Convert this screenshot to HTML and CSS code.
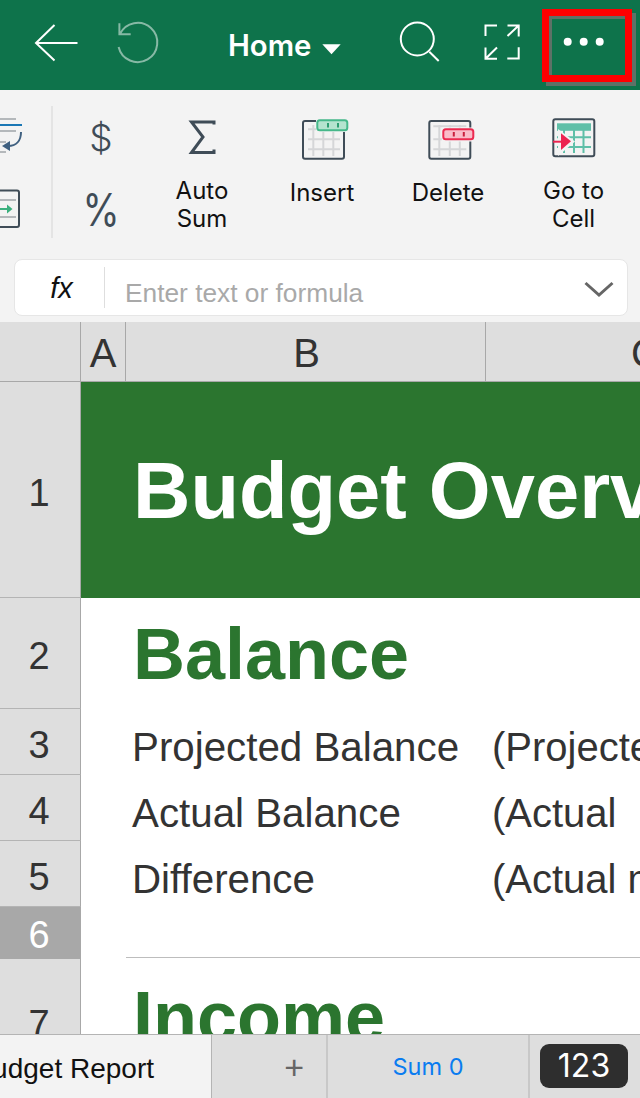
FILE: index.html
```html
<!DOCTYPE html>
<html lang="en">
<head>
<meta charset="utf-8">
<title>Budget Report</title>
<link rel="stylesheet" href="styles.css">
</head>
<body>
<div class="app">
  <header class="topbar">
    <svg class="ic ic-back" viewBox="34 0 46 90"><path d="M77.5 43H36M54.5 25 36 43l18.5 17.5"/></svg>
    <svg class="ic ic-undo" viewBox="116 0 44 90"><path d="M120 34A19.6 19.6 0 1 1 118.6 47M119.4 23.3V34.3H130.7"/></svg>
    <span class="home">Home</span>
    <svg class="ic ic-caret" viewBox="320 0 24 90"><path class="solid" d="M322.3 44.3H340.7L331.5 54.3Z"/></svg>
    <svg class="ic ic-search" viewBox="398 0 44 90"><circle cx="417.3" cy="39" r="16.5"/><path d="M429.3 51.7 438.7 61"/></svg>
    <svg class="ic ic-expand" viewBox="483 0 39 90"><path d="M485.5 36V25.5H497M518.7 47.3V58.5H507.3M507.5 25.5H518.7V36.5M518.7 25.5 507.5 36M485.5 47.5V58.7H497M485.5 58.7 497 47.5"/></svg>
    <svg class="ic ic-more" viewBox="560 0 48 90"><circle class="solid" cx="567.7" cy="41.7" r="4"/><circle class="solid" cx="583.7" cy="41.7" r="4"/><circle class="solid" cx="599.7" cy="41.7" r="4"/></svg>
    <div class="highlight"></div>
  </header>

  <section class="ribbon">
    <div class="tools">
      <div class="clip-col">
        <svg class="clip-icon" viewBox="0 112 26 48">
          <path class="g" d="M0 119H16M0 131H16M0 142H6M0 152H6"/>
          <path class="b" d="M0 125H22"/>
          <path class="a" d="M21 132C21 141 16 146 8 146"/>
          <path class="af" d="M2 146 10 141V151Z"/>
        </svg>
        <svg class="clip-icon" viewBox="0 186 26 46">
          <path class="g" d="M0 200H16M0 217H16"/>
          <path class="bx" d="M0 190.500H17A2 2 0 0 1 19 192.500V225A2 2 0 0 1 17 227H0"/>
          <path class="gr" d="M0 209H8"/>
          <path class="grf" d="M7 204.500 12.500 209 7 213.500Z"/>
        </svg>
      </div>
      <div class="divider"></div>
      <div class="fmt-col">
        <span class="fmt dollar">$</span>
        <span class="fmt percent">%</span>
      </div>
      <div class="tool">
        <svg class="tool-icon" viewBox="0 0 60 46"><path class="sigma" d="M42 6.500V4H19.500L31 19 19.500 34.500H42V31.500"/></svg>
        <span class="label">Auto<br>Sum</span>
      </div>
      <div class="tool">
        <svg class="tool-icon" viewBox="-7 0 60 46">
          <path class="gl" d="M9 11.300H41M9 21.300H41M9 31.300H41M14.300 7V38M24.300 7V38M34.300 7V38"/>
          <rect class="bx" x="4" y="3" width="41" height="37.700" rx="2"/>
          <rect class="halo" x="17" y="0" width="33" height="14"/>
          <rect class="pill-g" x="18.300" y="2.300" width="30" height="10" rx="2.500"/>
          <path class="tick-g" d="M29 5V9.500M39 5V9.500"/>
        </svg>
        <span class="label one">Insert</span>
      </div>
      <div class="tool">
        <svg class="tool-icon" viewBox="-10.300 0 60 46">
          <path class="gl" d="M5 8.300H38M5 21.300H38M5 31.300H38M11 7V38M21.500 7V38M31.500 7V38"/>
          <rect class="bx" x="1" y="3" width="41" height="37.700" rx="2"/>
          <rect class="halo" x="13.500" y="9.500" width="34" height="14"/>
          <rect class="pill-r" x="15" y="11.300" width="30" height="10" rx="2.500"/>
          <path class="tick-r" d="M25.500 14V18.500M35.500 14V18.500"/>
        </svg>
        <span class="label one">Delete</span>
      </div>
      <div class="tool">
        <svg class="tool-icon" viewBox="0 0 60 46">
          <rect class="bx" x="9.300" y="1.300" width="41" height="37" rx="2"/>
          <rect class="teal" x="13" y="5.300" width="34" height="7.500"/>
          <path class="tl" d="M13 19.300H47M13 29H47M30 12V35M39.500 12V35M20 12V35"/>
          <path class="halof" d="M14 11 31 23.500 14 38Z"/>
          <path class="redf" d="M17 15.300 27 23.300 17 32Z"/>
          <path class="redl" d="M9 23.700H18"/>
        </svg>
        <span class="label">Go to<br>Cell</span>
      </div>
    </div>
    <div class="formula">
      <span class="fx">fx</span>
      <span class="placeholder">Enter text or formula</span>
      <svg class="chev" viewBox="0 0 30 16"><path d="M1.500 2 15 14 28.500 2"/></svg>
    </div>
  </section>

  <main class="sheet">
    <div class="row head">
      <div class="rh"></div>
      <div class="ch col-a">A</div>
      <div class="ch col-b">B</div>
      <div class="ch col-c">C</div>
    </div>
    <div class="row r1">
      <div class="rh">1</div>
      <div class="title-cell">Budget Overview</div>
    </div>
    <div class="row r2">
      <div class="rh">2</div>
      <div class="col-a"></div>
      <div class="heading">Balance</div>
    </div>
    <div class="row r3">
      <div class="rh">3</div>
      <div class="col-a"></div>
      <div class="cell col-b">Projected Balance</div>
      <div class="cell col-c">(Projected end balance)</div>
    </div>
    <div class="row r3">
      <div class="rh">4</div>
      <div class="col-a"></div>
      <div class="cell col-b">Actual Balance</div>
      <div class="cell col-c">(Actual&nbsp;&nbsp;balance)</div>
    </div>
    <div class="row r3">
      <div class="rh">5</div>
      <div class="col-a"></div>
      <div class="cell col-b">Difference</div>
      <div class="cell col-c">(Actual minus projected)</div>
    </div>
    <div class="row r6">
      <div class="rh selected">6</div>
      <div class="col-a"></div>
      <div class="rule"></div>
    </div>
    <div class="row r7">
      <div class="rh">7</div>
      <div class="col-a"></div>
      <div class="heading inc">Income</div>
    </div>
  </main>

  <footer class="tabs">
    <div class="tab-name"><span>Budget Report</span></div>
    <div class="tab-add">+</div>
    <div class="tab-sum">Sum 0</div>
    <div class="tab-key"><span class="pill">123</span></div>
  </footer>
</div>
</body>
</html>
```
FILE: styles.css
```css
* { box-sizing: border-box; }
html, body { margin: 0; padding: 0; background: #fff; }
.app {
  width: 640px; height: 1098px; overflow: hidden;
  display: flex; flex-direction: column;
  font-family: "Liberation Sans", Arial, sans-serif;
}

/* top bar */
.topbar {
  position: relative; flex: 0 0 90px; height: 90px;
  display: flex; background: #0e734b; padding-left: 34px;
}
.ic { height: 90px; flex: none; fill: none; stroke: #fff; stroke-width: 2; }
.ic .solid { fill: #fff; stroke: none; }
.ic-back { width: 46px; }
.ic-undo { width: 44px; margin-left: 36px; opacity: .5; }
.home {
  margin-left: 68px; width: 92px; line-height: 92px; color: #fff;
  font-family: Inter, sans-serif; font-weight: 600; font-size: 29.300px;
}
.ic-caret { width: 24px; }
.ic-search { width: 44px; margin-left: 54px; }
.ic-expand { width: 39px; margin-left: 41px; }
.ic-more { width: 48px; margin-left: 38px; }
.highlight {
  position: absolute; left: 541.5px; top: 9px; width: 90px; height: 73px;
  border: 7px solid #fe0000;
  box-shadow: 4px 4px 0 #5d7267, inset 3px 3px 0 #5d7267;
}

/* ribbon */
.ribbon { flex: 0 0 232px; background: #f3f3f3; display: flex; flex-direction: column; }
.tools {
  height: 169px; display: grid;
  grid-template-columns: 51px 2px 96px 106px 134px 118px 133px;
}
.clip-col { display: flex; flex-direction: column; padding-top: 22px; gap: 26px; }
.clip-icon { width: 26px; height: 48px; fill: none; }
.clip-icon + .clip-icon { height: 46px; }
.g { stroke: #b4b8bb; stroke-width: 2; }
.b { stroke: #1a77b5; stroke-width: 2; }
.a { stroke: #3f6080; stroke-width: 2; }
.af { fill: #3f6080; }
.gr { stroke: #3bb07e; stroke-width: 2; }
.grf { fill: #3bb07e; }
.bx { fill: none; stroke: #3f4c57; stroke-width: 2; }
.divider { margin-top: 16px; height: 132px; background: #e4e4e4; }
.fmt-col { display: flex; flex-direction: column; align-items: center; color: #3f4c57; font-family: Inter, sans-serif; }
.fmt { display: block; line-height: 1; }
.dollar { margin-top: 29px; font-size: 37px; font-weight: 300; }
.percent { margin-top: 31px; font-size: 45px; font-weight: 400; transform: scaleX(.84); }
.tool { display: flex; flex-direction: column; align-items: center; padding-top: 28px; }
.tool-icon { width: 60px; height: 46px; flex: none; fill: none; }
.label {
  margin-top: 13px; text-align: center; color: #111;
  font-family: Inter, sans-serif; font-size: 24px; line-height: 28px;
}
.label.one { margin-top: 15px; }
.sigma { fill: none; stroke: #3f4c57; stroke-width: 3; }
.gl { stroke: #d5d6d8; stroke-width: 2; }
.halo { fill: #f3f3f3; }
.pill-g { fill: #b5e4cf; stroke: #46b88a; stroke-width: 2; }
.tick-g { stroke: #2e9e72; stroke-width: 2; }
.pill-r { fill: #f9bcc9; stroke: #ec2a50; stroke-width: 2; }
.tick-r { stroke: #c9203f; stroke-width: 2; }
.teal { fill: #5fbfa8; }
.tl { stroke: #5fbfa8; stroke-width: 2; }
.halof { fill: #f3f3f3; }
.redf { fill: #ec2350; }
.redl { stroke: #ec2350; stroke-width: 2; }

/* formula bar */
.formula {
  margin-left: 14px; width: 614px; height: 57px;
  display: flex; align-items: center;
  background: #fff; border: 1px solid #e6e6e6; border-radius: 8px;
}
.fx {
  width: 90px; height: 41px; line-height: 43px; text-align: center; padding-left: 4px;
  border-right: 1px solid #dedede; color: #111;
  font-style: italic; font-size: 29px;
}
.placeholder { margin-left: 20px; flex: 1; color: #a9a9a9; font-size: 26.300px; padding-top: 12px; }
.chev { width: 30px; height: 16px; margin-right: 13px; margin-top: 3px; fill: none; stroke: #666; stroke-width: 3; }

/* sheet */
.sheet { flex: 1; min-height: 0; overflow: hidden; }
.row { display: flex; color: #333; }
.rh {
  flex: 0 0 81px; width: 81px; background: #dedede;
  border-right: 1px solid #a8a8a8; border-bottom: 1px solid #b4b4b4;
  display: flex; align-items: center; justify-content: center;
  font-size: 38px; line-height: 1; color: #333; padding: 6px 2px 0 0;
}
.rh.selected { background: #a8a8a8; color: #fff; border-bottom: 0; border-right-color: #a8a8a8; padding-top: 4px; }
.col-a { flex: 0 0 45px; }
.col-b { flex: 0 0 360px; }
.col-c { flex: 0 0 320px; }
.head { height: 60px; background: #dedede; border-bottom: 1px solid #a8a8a8; }
.head .rh { border-bottom: 0; }
.ch {
  display: flex; align-items: center; justify-content: center;
  border-right: 1px solid #a8a8a8; font-size: 40px; color: #333; padding-top: 3px;
}
.ch.col-b { padding-left: 2px; }
.r1 { height: 216px; }
.title-cell {
  flex: 1; background: #2b752f; color: #fff; white-space: nowrap; overflow: hidden;
  font-weight: 700; font-size: 79.500px; line-height: 218px; padding-left: 52px;
}
.r2 { height: 111px; }
.heading {
  flex: 1; color: #2b752f; font-weight: 700; font-size: 72px; line-height: 112px; padding-left: 7px;
  white-space: nowrap;
}
.r3 { height: 66px; }
.cell {
  white-space: nowrap; overflow: hidden; font-size: 40.300px; line-height: 78px; padding-left: 6px;
}
.cell.col-c { font-size: 40px; line-height: 76px; }
.r6 { height: 52px; }
.rule { flex: 1; align-self: flex-end; height: 1px; background: #bdbdbd; margin-bottom: 1px; }
.r7 { height: 124px; }
.r7 .heading.inc { line-height: 116px; }
.r7 .rh { border-bottom: 0; }

/* bottom tabs */
.tabs { flex: 0 0 64px; height: 64px; min-height: 0; display: flex; overflow: hidden; background: #dedede; border-top: 1px solid #b4b4b4; }
.tab-name {
  flex: 0 0 212px; padding-top: 4px; background: #f3f3f3; border-right: 1px solid #b4b4b4;
  display: flex; justify-content: flex-end; align-items: center;
  padding-right: 57px; color: #111; font-size: 28px; white-space: nowrap; overflow: hidden;
}
.tab-add {
  flex: 0 0 116px; border-right: 2px solid #c8c8c8; padding: 0 22px 0 0;
  display: flex; justify-content: flex-end; align-items: center;
  color: #666; font-size: 34px; line-height: 1;
}
.tab-sum {
  flex: 0 0 202px; border-right: 2px solid #c8c8c8;
  display: flex; justify-content: center; align-items: center;
  color: #0a7cf0; font-family: Inter, sans-serif; font-size: 23.500px; line-height: 1;
}
.tab-key { flex: 1; padding: 9px 12px 0 10px; }
.pill {
  display: block; height: 44px; border-radius: 9px; background: #2e2e2e; color: #fff;
  text-align: center; font-family: Inter, sans-serif; font-size: 32px; line-height: 44px;
}
```
